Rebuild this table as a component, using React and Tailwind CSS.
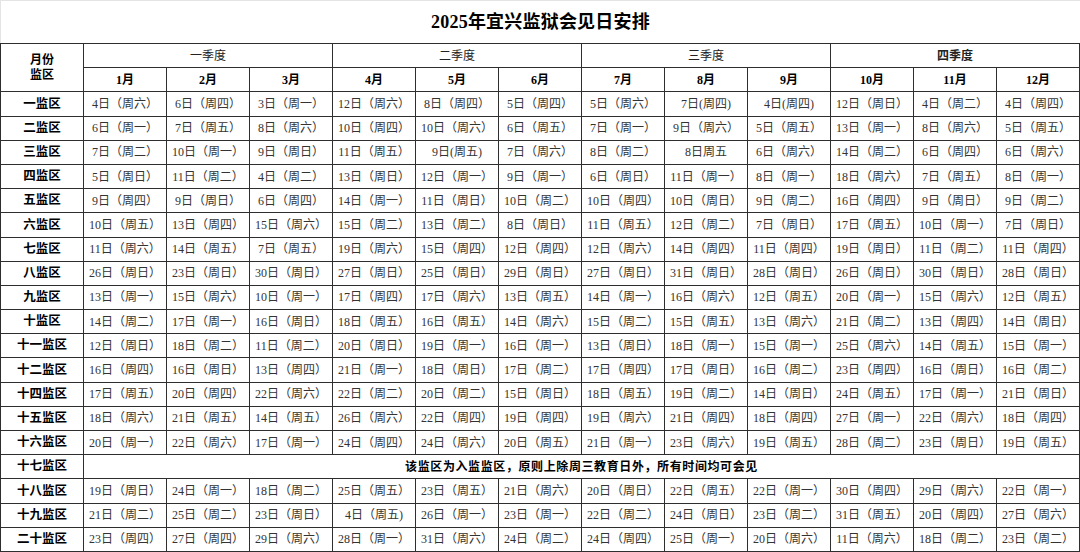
import React from 'react';

// 2025年宜兴监狱会见日安排 — 会见日表格
const quarters = ['一季度', '二季度', '三季度', '四季度'];
const months = ['1月', '2月', '3月', '4月', '5月', '6月', '7月', '8月', '9月', '10月', '11月', '12月'];

const rows = [
    ['一监区', ['4日（周六）', '6日（周四）', '3日（周一）', '12日（周六）', '8日（周四）', '5日（周四）', '5日（周六）', '7日(周四)', '4日(周四)', '12日（周日）', '4日（周二）', '4日（周四）']],
    ['二监区', ['6日（周一）', '7日（周五）', '8日（周六）', '10日（周四）', '10日（周六）', '6日（周五）', '7日（周一）', '9日（周六）', '5日（周五）', '13日（周一）', '8日（周六）', '5日（周五）']],
    ['三监区', ['7日（周二）', '10日（周一）', '9日（周日）', '11日（周五）', '9日(周五)', '7日（周六）', '8日（周二）', '8日周五', '6日（周六）', '14日（周二）', '6日（周四）', '6日（周六）']],
    ['四监区', ['5日（周日）', '11日（周二）', '4日（周二）', '13日（周日）', '12日（周一）', '9日（周一）', '6日（周日）', '11日（周一）', '8日（周一）', '18日（周六）', '7日（周五）', '8日（周一）']],
    ['五监区', ['9日（周四）', '9日（周日）', '6日（周四）', '14日（周一）', '11日（周日）', '10日（周二）', '10日（周四）', '10日（周日）', '9日（周二）', '16日（周四）', '9日（周日）', '9日（周二）']],
    ['六监区', ['10日（周五）', '13日（周四）', '15日（周六）', '15日（周二）', '13日（周二）', '8日（周日）', '11日（周五）', '12日（周二）', '7日（周日）', '17日（周五）', '10日（周一）', '7日（周日）']],
    ['七监区', ['11日（周六）', '14日（周五）', '7日（周五）', '19日（周六）', '15日（周四）', '12日（周四）', '12日（周六）', '14日（周四）', '11日（周四）', '19日（周日）', '11日（周二）', '11日（周四）']],
    ['八监区', ['26日（周日）', '23日（周日）', '30日（周日）', '27日（周日）', '25日（周日）', '29日（周日）', '27日（周日）', '31日（周日）', '28日（周日）', '26日（周日）', '30日（周日）', '28日（周日）']],
    ['九监区', ['13日（周一）', '15日（周六）', '10日（周一）', '17日（周四）', '17日（周六）', '13日（周五）', '14日（周一）', '16日（周六）', '12日（周五）', '20日（周一）', '15日（周六）', '12日（周五）']],
    ['十监区', ['14日（周二）', '17日（周一）', '16日（周日）', '18日（周五）', '16日（周五）', '14日（周六）', '15日（周二）', '15日（周五）', '13日（周六）', '21日（周二）', '13日（周四）', '14日（周日）']],
    ['十一监区', ['12日（周日）', '18日（周二）', '11日（周二）', '20日（周日）', '19日（周一）', '16日（周一）', '13日（周日）', '18日（周一）', '15日（周一）', '25日（周六）', '14日（周五）', '15日（周一）']],
    ['十二监区', ['16日（周四）', '16日（周日）', '13日（周四）', '21日（周一）', '18日（周日）', '17日（周二）', '17日（周四）', '17日（周日）', '16日（周二）', '23日（周四）', '16日（周日）', '16日（周二）']],
    ['十四监区', ['17日（周五）', '20日（周四）', '22日（周六）', '22日（周二）', '20日（周二）', '15日（周日）', '18日（周五）', '19日（周二）', '14日（周日）', '24日（周五）', '17日（周一）', '21日（周日）']],
    ['十五监区', ['18日（周六）', '21日（周五）', '14日（周五）', '26日（周六）', '22日（周四）', '19日（周四）', '19日（周六）', '21日（周四）', '18日（周四）', '27日（周一）', '22日（周六）', '18日（周四）']],
    ['十六监区', ['20日（周一）', '22日（周六）', '17日（周一）', '24日（周四）', '24日（周六）', '20日（周五）', '21日（周一）', '23日（周六）', '19日（周五）', '28日（周二）', '23日（周日）', '19日（周五）']],
    ['十七监区', null],
    ['十八监区', ['19日（周日）', '24日（周一）', '18日（周二）', '25日（周五）', '23日（周五）', '21日（周六）', '20日（周日）', '22日（周五）', '22日（周一）', '30日（周四）', '29日（周六）', '22日（周一）']],
    ['十九监区', ['21日（周二）', '25日（周二）', '23日（周日）', '4日（周五)', '26日（周一）', '23日（周一）', '22日（周二）', '24日（周日）', '23日（周二）', '31日（周五）', '20日（周四）', '27日（周六）']],
    ['二十监区', ['23日（周四）', '27日（周四）', '29日（周六）', '28日（周一）', '31日（周六）', '24日（周二）', '24日（周四）', '25日（周一）', '20日（周六）', '11日（周六）', '18日（周二）', '23日（周二）']],
];

const App = () => {
    return (
        <div className="w-[1080px] h-[552px] bg-white overflow-hidden font-['Liberation_Serif','Noto_Sans_CJK_SC',serif]">
            {/* titolo */}
            <div className="h-[43px] flex items-center justify-center border-t border-l border-[#e4e4e4]">
                <h1 className="text-[18px] font-bold text-black tracking-[0.2px]">2025年宜兴监狱会见日安排</h1>
            </div>

            {/* tabella */}
            <div className="grid grid-cols-[repeat(13,82px)] auto-rows-[23.2px] gap-px p-px bg-[#2e2e2e] w-[1080px]">
                <div className="row-span-2 bg-white flex flex-col items-center justify-center text-[12px] font-bold text-black leading-[15px]">
                    <span>月份</span>
                    <span>监区</span>
                </div>
                {quarters.map((q, i) => (
                    <div key={q} className={`col-span-3 bg-white flex items-center justify-center text-[12px] text-[#222] ${i === 3 ? 'font-bold' : ''}`}>
                        {q}
                    </div>
                ))}
                {months.map((m) => (
                    <div key={m} className="bg-white flex items-center justify-center text-[12px] font-bold text-black">
                        {m}
                    </div>
                ))}

                {rows.map(([name, cells]) => (
                    <React.Fragment key={name}>
                        <div className="bg-white flex items-center justify-center text-[12.5px] font-bold text-black">
                            {name}
                        </div>
                        {cells ? (
                            cells.map((c, i) => (
                                <div key={i} className="bg-white flex items-center justify-center text-[12px] text-[#333] whitespace-nowrap">
                                    {c}
                                </div>
                            ))
                        ) : (
                            <div className="col-span-12 bg-white flex items-center justify-center text-[12px] font-bold text-black tracking-[0.6px]">
                                该监区为入监监区，原则上除周三教育日外，所有时间均可会见
                            </div>
                        )}
                    </React.Fragment>
                ))}
            </div>
        </div>
    );
};

export default App;
